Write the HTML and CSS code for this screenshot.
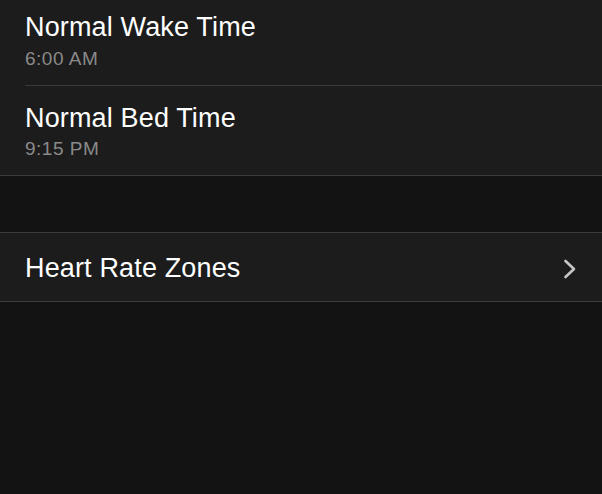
FILE: index.html
```html
<!DOCTYPE html>
<html>
<head>
<meta charset="utf-8">
<link rel="stylesheet" href="styles.css">
</head>
<body>
<div class="group group-top">
  <div class="cell">
    <div class="cell-inner cell-first">
      <div class="title">Normal Wake Time</div>
      <div class="subtitle">6:00 AM</div>
    </div>
  </div>
  <div class="cell">
    <div class="cell-inner cell-last">
      <div class="title">Normal Bed Time</div>
      <div class="subtitle">9:15 PM</div>
    </div>
  </div>
</div>
<div class="group group-second">
  <div class="cell">
    <div class="cell-inner cell-last link">
      <div class="title">Heart Rate Zones</div>
      <svg class="chevron" width="14" height="20" viewBox="0 0 14 20"><path d="M2.5 2 L11 10 L2.5 18" fill="none" stroke="#c6c6c8" stroke-width="2.6" stroke-linecap="round" stroke-linejoin="round"/></svg>
    </div>
  </div>
</div>
</body>
</html>
```

FILE: styles.css
```css
html, body {
  margin: 0;
  padding: 0;
  background: #131313;
  font-family: "Liberation Sans", Arial, sans-serif;
  color: #ffffff;
}
.group {
  background: #1c1c1c;
  border-bottom: 1px solid #3c3c3c;
}
.group-second {
  margin-top: 56px;
  border-top: 1px solid #3c3c3c;
}
.cell {
  padding-left: 25px;
}
.cell-inner {
  padding: 17px 25px 15px 0;
  border-bottom: 1px solid #3a3a3a;
}
.cell-first {
  padding-top: 12px;
}
.cell-first .subtitle {
  margin-top: 5px;
}
.cell-last {
  border-bottom: none;
}
.title {
  font-size: 27px;
  line-height: 31px;
  letter-spacing: 0.15px;
}
.subtitle {
  margin-top: 4px;
  font-size: 19px;
  line-height: 22px;
  letter-spacing: 0.5px;
  color: #8a8a8a;
}
.link {
  display: flex;
  align-items: center;
  justify-content: space-between;
  padding-top: 20px;
  padding-bottom: 17px;
}
.chevron {
  display: block;
}
```
